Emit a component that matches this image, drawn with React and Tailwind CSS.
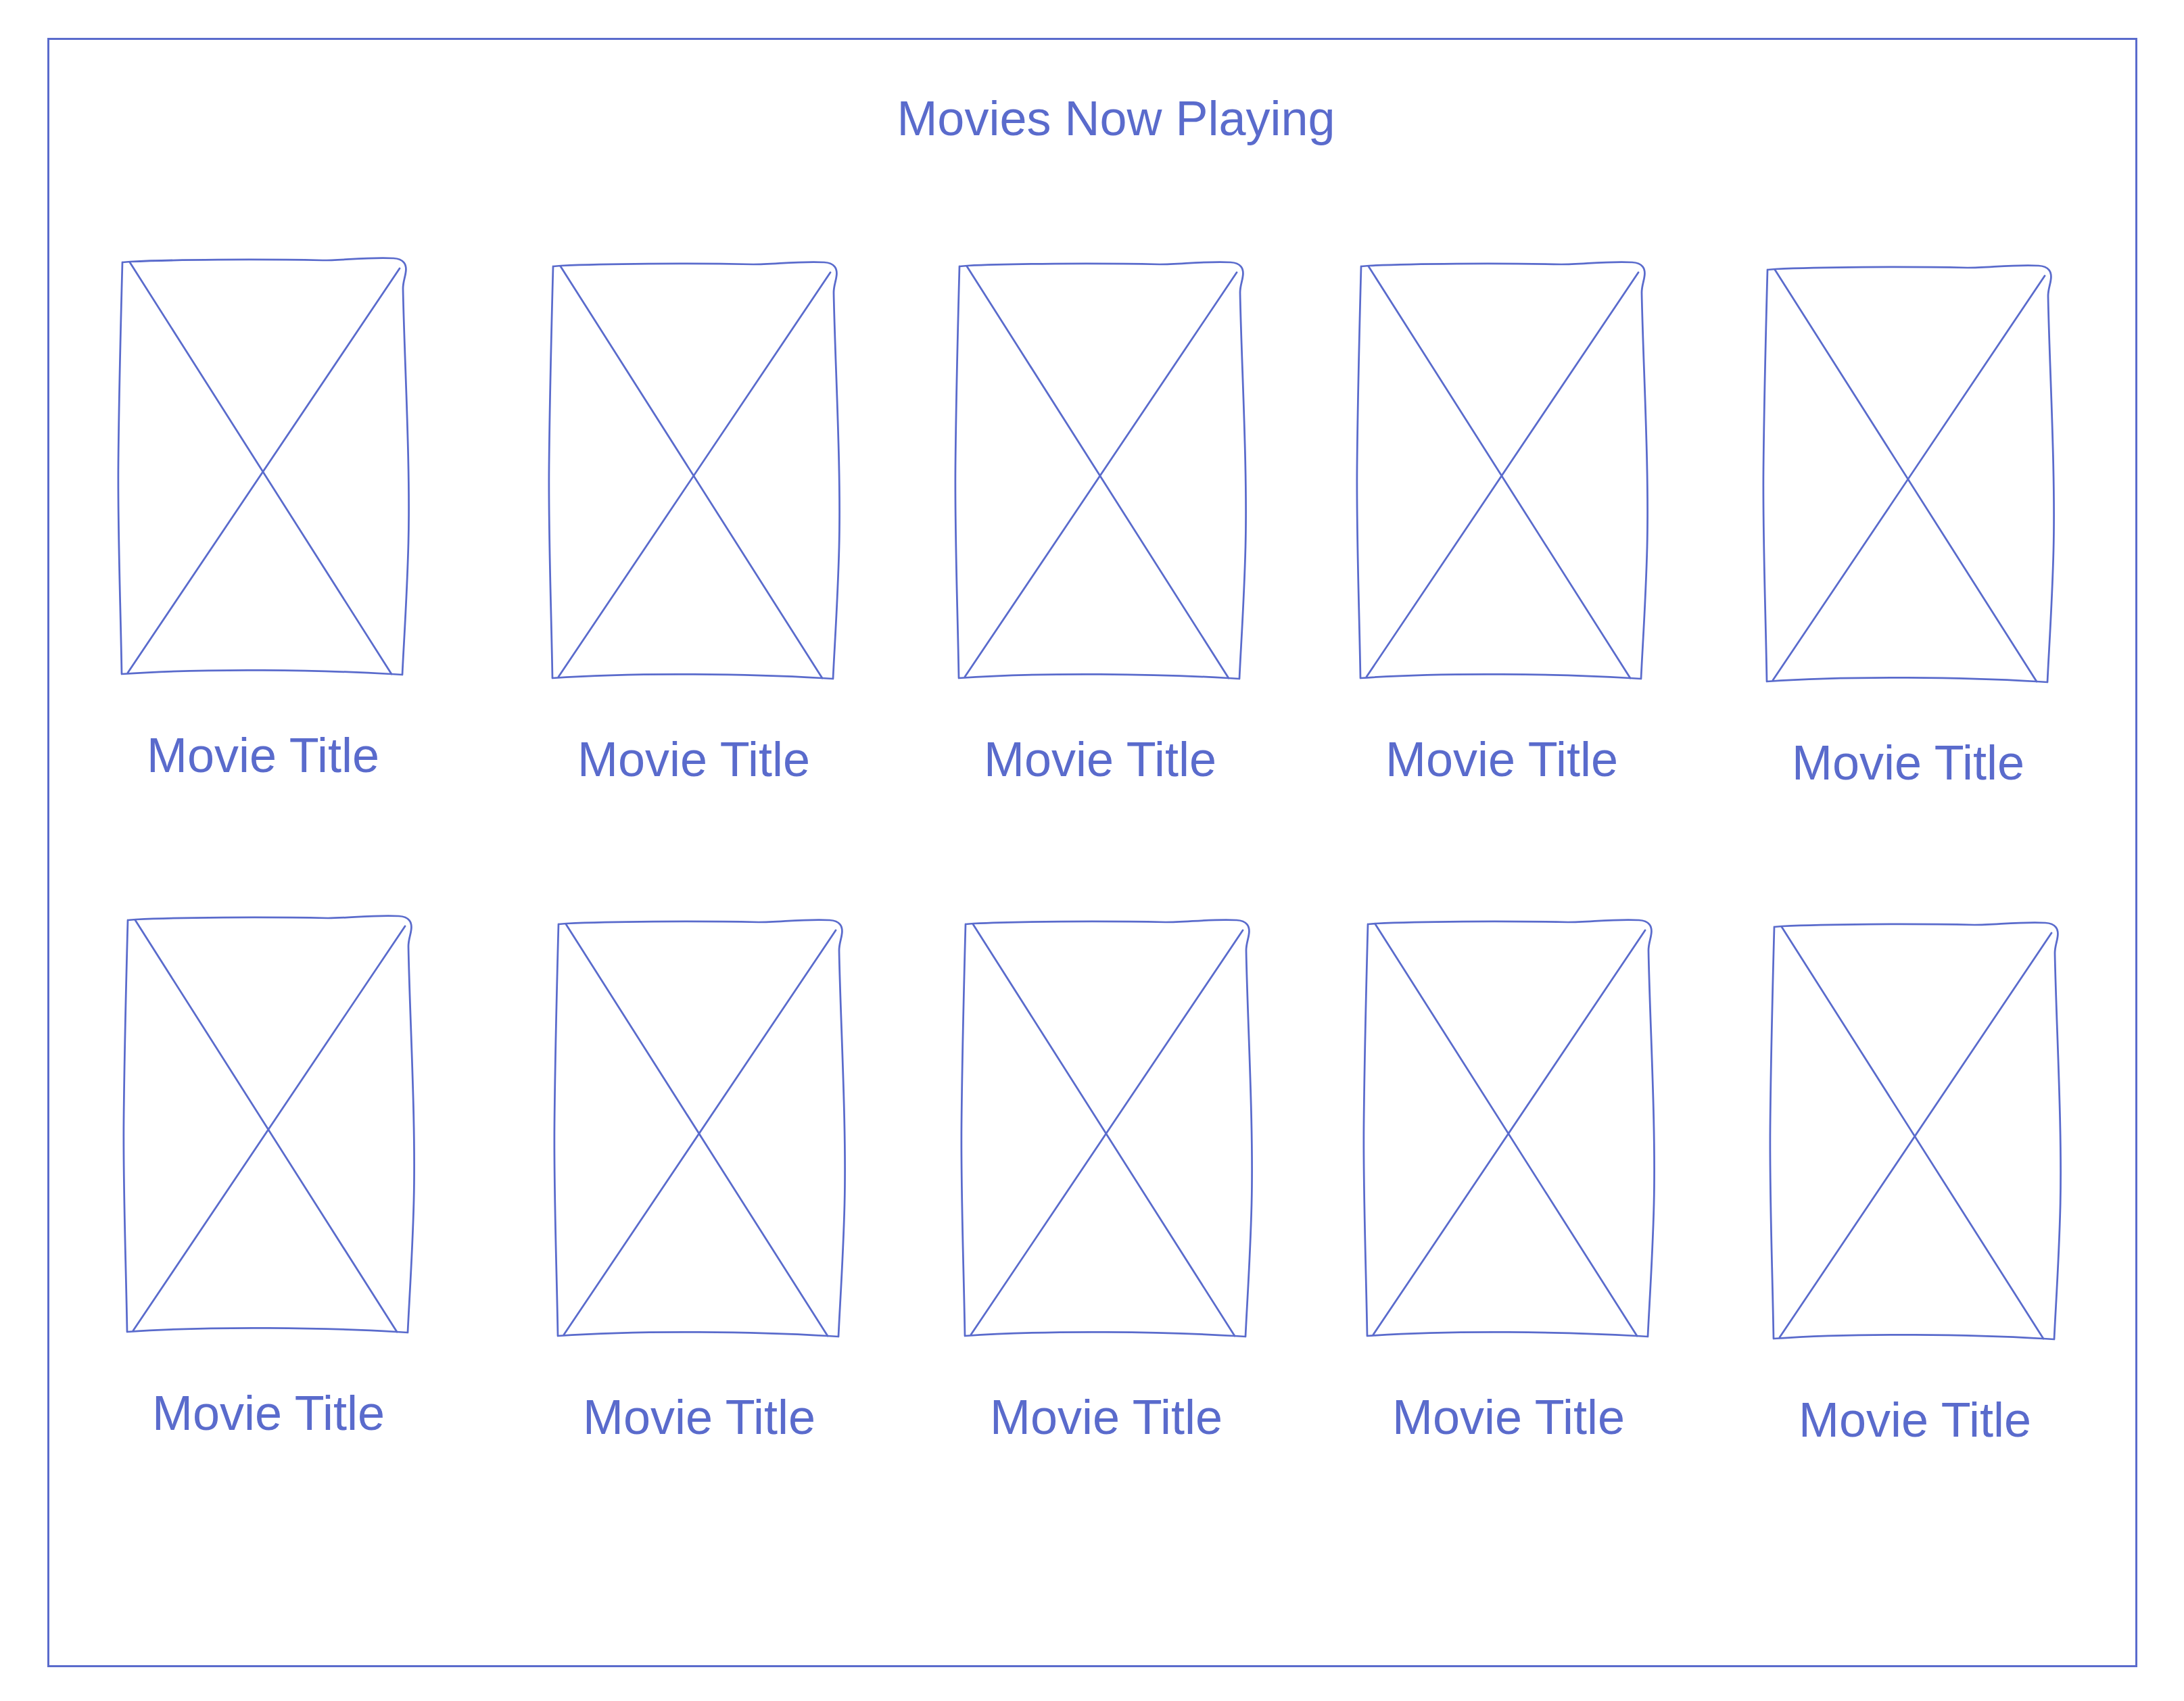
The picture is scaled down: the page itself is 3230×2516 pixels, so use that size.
import React from 'react';

const INK = '#5a6bcc';

// row/card offsets measured from the sketch (hand-placed, so not uniform)
const rows = [
  {
    cards: [
      { cls: 'ml-[96px] mt-[164px]' },
      { cls: 'ml-[197px] mt-[170px]' },
      { cls: 'ml-[161px] mt-[170px]' },
      { cls: 'ml-[154px] mt-[170px]' },
      { cls: 'ml-[161px] mt-[175px]' },
    ],
  },
  {
    cards: [
      { cls: 'ml-[104px] mt-[184px]' },
      { cls: 'ml-[197px] mt-[190px]' },
      { cls: 'ml-[162px] mt-[190px]' },
      { cls: 'ml-[155px] mt-[190px]' },
      { cls: 'ml-[161px] mt-[194px]' },
    ],
  },
];

const PosterSketch = () => (
  <svg
    width="440"
    height="630"
    viewBox="-8 -8 440 630"
    fill="none"
    stroke={INK}
    strokeWidth="2.75"
    strokeLinecap="round"
    strokeLinejoin="round"
  >
    <path d="M4 5 L16 4 C80 1 200 0 300 2 C330 2 370 -3 405 -1 C420 0 425 8 423 20 C422 28 419 34 419 44 C421 150 430 300 427 420 C425 500 420 570 418 615 L402 614 C300 608 130 605 3 614 C1 500 -3 400 -2 300 C-1 200 2 80 4 5" />
    <path d="M15 5 L402 614" />
    <path d="M414 14 L12 612" />
  </svg>
);

const MovieCard = ({ className }) => (
  <div className={`flex w-[440px] shrink-0 flex-col items-center ${className}`}>
    <PosterSketch />
    <p className="mt-[76px] h-[72px] text-[72px] leading-none whitespace-nowrap text-[#5a6bcc]">
      Movie Title
    </p>
  </div>
);

export default function App() {
  return (
    <div className="min-h-[2516px] w-[3230px] bg-white pt-[56px] pl-[70px] font-['Liberation_Sans',Arial,sans-serif]">
      <div className="flex h-[2410px] w-[3091px] flex-col border-[3px] border-[#5a6bcc]">
        <div className="mt-[80px] flex h-[72px] justify-center pl-[70px]">
          <h1 className="text-[72px] leading-none whitespace-nowrap text-[#5a6bcc]">Movies Now Playing</h1>
        </div>

        {rows.map((row, i) => (
          <div key={i} className="flex items-start">
            {row.cards.map((card, j) => (
              <MovieCard key={j} className={card.cls} />
            ))}
          </div>
        ))}
      </div>
    </div>
  );
}
